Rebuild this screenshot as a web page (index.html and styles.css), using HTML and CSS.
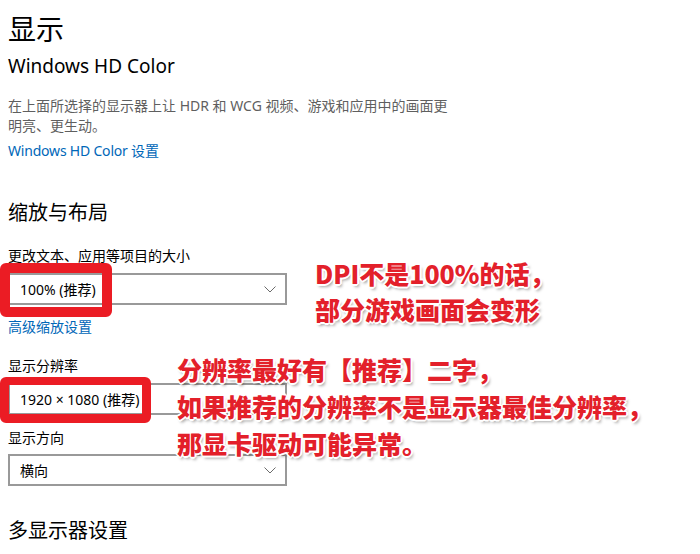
FILE: index.html
```html
<!DOCTYPE html>
<html lang="zh-CN">
<head>
    <meta charset="UTF-8">
    <title>显示</title>
    <link rel="stylesheet" href="styles.css">
</head>
<body>
    <div class="page">
        <h1 class="title">显示</h1>
        <h2 class="subtitle">Windows HD Color</h2>
        <p class="desc">在上面所选择的显示器上让 HDR 和 WCG 视频、游戏和应用中的画面更<br>明亮、更生动。</p>
        <a href="#" class="link link-hd">Windows HD Color 设置</a>

        <h3 class="section">缩放与布局</h3>

        <div class="label label-first">更改文本、应用等项目的大小</div>
        <div class="select-wrap">
            <div class="select">
                <span>100% (推荐)</span>
                <svg class="chevron" width="12" height="7" viewBox="0 0 12 7"><polyline points="0.5,0.5 6,6 11.5,0.5" fill="none" stroke="#6b6b6b" stroke-width="1"/></svg>
            </div>
            <div class="mark mark-scale"></div>
        </div>
        <a href="#" class="link link-scale">高级缩放设置</a>

        <div class="label label-res">显示分辨率</div>
        <div class="select-wrap">
            <div class="select">
                <span>1920 × 1080 (推荐)</span>
                <svg class="chevron" width="12" height="7" viewBox="0 0 12 7"><polyline points="0.5,0.5 6,6 11.5,0.5" fill="none" stroke="#6b6b6b" stroke-width="1"/></svg>
            </div>
            <div class="mark mark-res"></div>
        </div>

        <div class="label label-dir">显示方向</div>
        <div class="select-wrap select-dir">
            <div class="select">
                <span>横向</span>
                <svg class="chevron" width="12" height="7" viewBox="0 0 12 7"><polyline points="0.5,0.5 6,6 11.5,0.5" fill="none" stroke="#6b6b6b" stroke-width="1"/></svg>
            </div>
        </div>

        <h3 class="section section-multi">多显示器设置</h3>

        <!-- annotations drawn over the screenshot -->
        <div class="note note-dpi">DPI不是100%的话，<br>部分游戏画面会变形</div>
        <div class="note note-res">分辨率最好有【推荐】二字，<br>如果推荐的分辨率不是显示器最佳分辨率，<br>那显卡驱动可能异常。</div>
    </div>
</body>
</html>
```

FILE: styles.css
```css
* {
    margin: 0;
    padding: 0;
    box-sizing: border-box;
}

body {
    font-family: "Noto Sans", "Noto Sans CJK SC", sans-serif;
    background: #fff;
    color: #000;
}

.page {
    position: relative;
    width: 700px;
    height: 554px;
    padding: 11px 0 0 8px;
    overflow: hidden;
}

.title {
    font-size: 28px;
    font-weight: 400;
    line-height: 36px;
}

.subtitle {
    font-size: 19px;
    font-weight: 400;
    line-height: 28px;
    margin-top: 5px;
}

.desc {
    font-size: 14px;
    line-height: 20px;
    color: #5f5f5f;
    margin-top: 16px;
}

.link {
    display: block;
    font-size: 14px;
    line-height: 20px;
    color: #0067b8;
    text-decoration: none;
}

.link-hd {
    margin-top: 5px;
    letter-spacing: -0.2px;
}

.link-scale {
    margin-top: 12px;
}

.section {
    font-size: 20px;
    font-weight: 400;
    line-height: 28px;
    margin-top: 38px;
}

.section-multi {
    margin-top: 31px;
}

.label {
    font-size: 14px;
    line-height: 20px;
}

.label-first {
    margin-top: 19px;
}

.label-res {
    margin-top: 19px;
}

.label-dir {
    margin-top: 13px;
}

.select-wrap {
    position: relative;
    width: 279px;
    margin-top: 7px;
}

.select-dir {
    margin-top: 6px;
}

.select {
    display: flex;
    align-items: center;
    justify-content: space-between;
    height: 32px;
    padding: 0 9px 0 10px;
    border: 2px solid #999;
    font-size: 14px;
}

/* red highlight frames */
.mark {
    position: absolute;
    left: -8px;
    border: 10px solid #eb1c24;
    border-radius: 6px;
}

.mark-scale {
    top: -10px;
    width: 112px;
    height: 54px;
}

.mark-res {
    top: -6px;
    width: 151px;
    height: 46px;
    border-width: 8px 9px 9px 9px;
}

.note {
    position: absolute;
    font-family: "Noto Sans CJK SC", sans-serif;
    font-weight: 900;
    font-size: 25px;
    line-height: 36px;
    color: #e3202a;
    white-space: nowrap;
    text-shadow:
        -2px 0 0 #fff, 2px 0 0 #fff, 0 -2px 0 #fff, 0 2px 0 #fff,
        -1px -1px 0 #fff, 1px -1px 0 #fff, -1px 1px 0 #fff, 1px 1px 0 #fff,
        2px 3px 3px rgba(0, 0, 0, 0.35);
}

.note-dpi {
    left: 315px;
    top: 255px;
}

.note-res {
    left: 177px;
    top: 351px;
    line-height: 37px;
}
```
